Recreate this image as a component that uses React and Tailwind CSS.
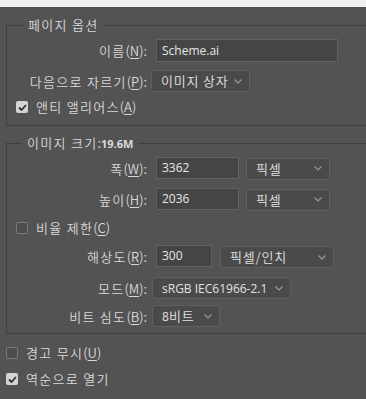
import React from "react";

const font = { fontFamily: '"Noto Sans CJK KR", "Noto Sans", sans-serif' };
const latin = { fontFamily: '"Open Sans", "Noto Sans", sans-serif' };

function K({ children }) {
  return <span className="tracking-[1.3px]">{children}</span>;
}

function KS({ children }) {
  return <span className="tracking-[0.8px]">{children}</span>;
}

function U({ children }) {
  return <span className="underline underline-offset-2">{children}</span>;
}

function Chevron() {
  return (
    <svg width="8" height="5" viewBox="0 0 8 5" className="shrink-0">
      <path d="M0.5 0.5 L4 4 L7.5 0.5" fill="none" stroke="#9c9c9c" strokeWidth="1.1" />
    </svg>
  );
}

function Select({ children, w, className = "" }) {
  return (
    <div
      className={`h-[22px] flex items-center justify-between pl-[9px] pr-[7px] bg-[#4a4a4a] border border-[#5f5f5f] rounded-[3px] text-[13px] text-[#e2e2e2] ${className}`}
      style={{ width: w }}
    >
      <span className="whitespace-nowrap">{children}</span>
      <Chevron />
    </div>
  );
}

function Input({ text, w, className = "" }) {
  return (
    <div
      className={`h-[22px] flex items-center pl-[5px] bg-[#454545] border border-[#626262] text-[12px] font-normal text-[#e6e6e6] ${className}`}
      style={{ width: w, ...latin }}
    >
      {text}
    </div>
  );
}

function Label({ children }) {
  return (
    <div className="w-[140px] text-right text-[13px] text-[#d8d8d8] whitespace-nowrap leading-none">
      {children}
    </div>
  );
}

function Check({ checked }) {
  return checked ? (
    <div className="w-[12px] h-[12px] rounded-[2px] bg-[#d4d4d4] flex items-center justify-center shrink-0">
      <svg width="9" height="7" viewBox="0 0 9 7">
        <path d="M1 3.5 L3.5 6 L8 1" fill="none" stroke="#333" strokeWidth="1.8" />
      </svg>
    </div>
  ) : (
    <div className="w-[12px] h-[12px] rounded-[2px] border border-[#7a7a7a] bg-[#4d4d4d] shrink-0" />
  );
}

export default function App() {
  return (
    <div className="w-[366px] h-[399px] overflow-hidden bg-[#535353] text-[#dcdcdc] font-[350]" style={font}>
      <div className="h-[7px] bg-[#f0f0f0]" />

      <fieldset className="ml-[6px] -mr-[10px] mt-[10px] border border-[#3f3f3f] pb-[10px]">
        <legend className="ml-[16px] px-[5px] h-[16px] text-[13px] leading-[16px] text-[#dadada]"><K>페이지 옵션</K></legend>
        <div className="mt-[6px] flex items-center h-[23px]">
          <Label><K>이름</K>(<U>N</U>):</Label>
          <Input text="Scheme.ai" w={182} className="ml-[9px] h-[23px]" />
        </div>
        <div className="mt-[8px] flex items-center h-[22px]">
          <Label><K>다음으로 자르기</K>(<U>P</U>):</Label>
          <Select w={99} className="ml-[4px]"><KS>이미지 상자</KS></Select>
        </div>
        <div className="mt-[7px] flex items-center h-[16px] pl-[9px] gap-[8px] text-[13px] text-[#dadada]">
          <Check checked />
          <span><K>앤티 앨리어스</K>(<U>A</U>)</span>
        </div>
      </fieldset>

      <fieldset className="ml-[6px] -mr-[10px] mt-[9px] border border-[#3f3f3f] pb-[6px]">
        <legend className="ml-[15px] px-[5px] h-[16px] text-[13px] leading-[16px] text-[#dadada] whitespace-nowrap">
          <K>이미지 크기</K>:<span className="text-[11px] font-bold" style={latin}>19.6M</span>
        </legend>
        <div className="mt-[6px] flex items-center h-[22px]">
          <Label><K>폭</K>(<U>W</U>):</Label>
          <Input text="3362" w={83} className="ml-[9px]" />
          <Select w={84} className="ml-[7px] mt-[1px]"><KS>픽셀</KS></Select>
        </div>
        <div className="mt-[9px] flex items-center h-[22px]">
          <Label><K>높이</K>(<U>H</U>):</Label>
          <Input text="2036" w={83} className="ml-[9px]" />
          <Select w={84} className="ml-[7px] mt-[1px]"><KS>픽셀</KS></Select>
        </div>
        <div className="mt-[10px] flex items-center h-[16px] pl-[9px] gap-[8px] text-[13px] text-[#dadada]">
          <Check />
          <span><K>비율 제한</K>(<U>C</U>)</span>
        </div>
        <div className="mt-[9px] flex items-center h-[22px]">
          <Label><K>해상도</K>(<U>R</U>):</Label>
          <Input text="300" w={56} className="ml-[9px]" />
          <Select w={114} className="ml-[8px] mt-[2px]"><KS>픽셀/인치</KS></Select>
        </div>
        <div className="mt-[10px] flex items-center h-[22px]">
          <Label><K>모드</K>(<U>M</U>):</Label>
          <Select w={139} className="ml-[5px]"><span className="text-[12px] font-normal" style={latin}>sRGB IEC61966-2.1</span></Select>
        </div>
        <div className="mt-[6px] flex items-center h-[22px]">
          <Label><K>비트 심도</K>(<U>B</U>):</Label>
          <Select w={68} className="ml-[5px]"><span className="text-[12px] font-normal" style={latin}>8</span><KS>비트</KS></Select>
        </div>
      </fieldset>

      <div className="mt-[11px] ml-[6px] flex items-center h-[16px] gap-[8px] text-[13px] text-[#dadada]">
        <Check />
        <span><K>경고 무시</K>(<U>U</U>)</span>
      </div>
      <div className="mt-[10px] ml-[6px] flex items-center h-[16px] gap-[8px] text-[13px] text-[#dadada]">
        <Check checked />
        <span><K>역순으로 열기</K></span>
      </div>
    </div>
  );
}
